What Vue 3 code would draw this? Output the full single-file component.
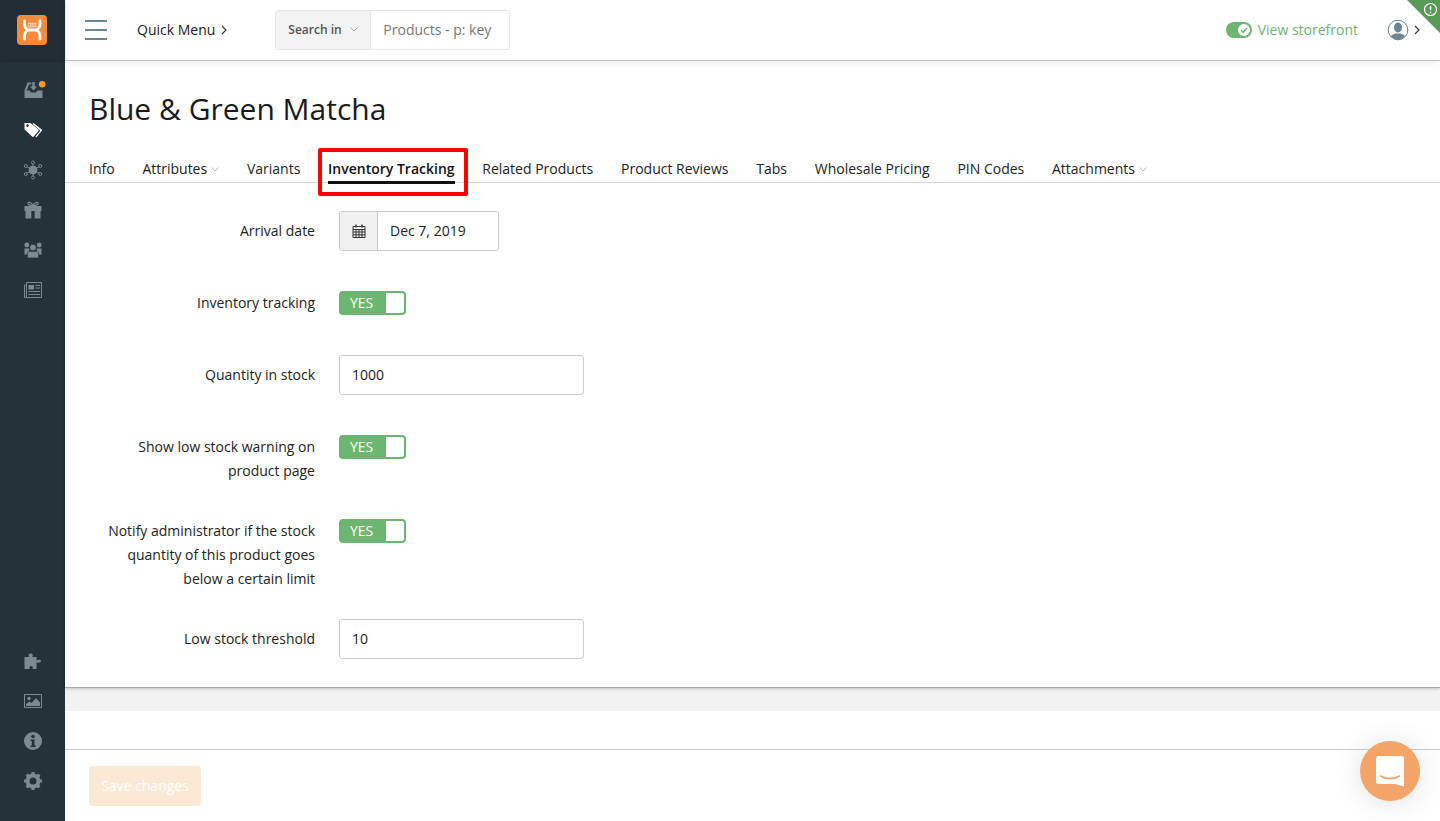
<template>
  <div class="app">
    <!-- Sidebar -->
    <aside class="sidebar">
      <div class="logo-band">
        <div class="logo">
          <svg width="30" height="30" viewBox="0 0 30 30" fill="none">
            <path d="M7.500 6v3.500c0 3 1.600 4 3.200 5.500-1.600 1.500-3.200 2.500-3.200 5.500v3.500M23 6v3.500c0 3-1.600 4-3.200 5.500 1.600 1.500 3.200 2.500 3.200 5.500v3.500M10.700 15h9.100" stroke="#fff" stroke-width="2.800" stroke-linecap="round" />
            <path d="M11.300 8.200h8M11.300 10h8M11.300 11.800h8" stroke="#fff" stroke-width="1.100" stroke-dasharray="1.200 .5" />
          </svg>
        </div>
      </div>
      <nav class="nav-top">
        <div class="nav-item">
          <svg class="inbox" width="20" height="20" viewBox="0 0 20 20" fill="#7e8a93">
            <path d="M1.500 10.500H6.500L8 12.500h5l1.500-2h5V18h-18z" />
            <path d="M1.500 10.500 4.500 2.500h3.800v2H6L3.800 10.500z" />
            <path d="M9.300 2h2.400v4.500H14l-3.500 4-3.500-4h2.300z" />
            <circle cx="19.200" cy="4.300" r="3.300" fill="#f39a2c" />
          </svg>
        </div>
        <div class="nav-item">
          <svg width="20" height="20" viewBox="0 0 20 20" fill="#fff">
            <path d="M1.500 3h6l8 6.500c.5.400.5.900.1 1.300l-4.800 5.800c-.4.500-.9.500-1.400.1L1.500 9.500zM4.500 4.300a1.300 1.300 0 1 0 .01 0z" fill-rule="evenodd" />
            <path d="M10.500 3l8.200 6.500c.5.400.5.900.1 1.300l-5.300 6.400-1.100-.8 5-6-7.800-6.400z" />
          </svg>
        </div>
        <div class="nav-item">
          <svg width="20" height="20" viewBox="0 0 20 20" fill="none" stroke="#7e8a93" stroke-width="1">
            <path d="M10 3v14M2.500 6l15 8M17.500 6l-15 8" />
            <circle cx="10" cy="10" r="4" fill="#7e8a93" />
            <circle cx="10" cy="2.500" r="1.500" fill="#25323a" />
            <circle cx="10" cy="17.500" r="1.500" fill="#25323a" />
            <circle cx="2.800" cy="6" r="1.500" fill="#25323a" />
            <circle cx="17.200" cy="6" r="1.500" fill="#25323a" />
            <circle cx="2.800" cy="14" r="1.500" fill="#25323a" />
            <circle cx="17.200" cy="14" r="1.500" fill="#25323a" />
          </svg>
        </div>
        <div class="nav-item">
          <svg width="20" height="20" viewBox="0 0 20 20" fill="#7e8a93">
            <path d="M1.500 6h17v5h-17zM2.500 11h5.800v7.500H2.500zM11.700 11h5.800v7.500h-5.800z" />
            <path d="M10 5.500C8.500 2.500 5.500 1.500 5 3c-.5 1.600 2.200 2.500 5 2.500zM10 5.500c1.500-3 4.500-4 5-2.500.5 1.600-2.200 2.500-5 2.500z" fill="none" stroke="#7e8a93" stroke-width="1.200" />
          </svg>
        </div>
        <div class="nav-item">
          <svg width="20" height="20" viewBox="0 0 20 20" fill="#7e8a93">
            <circle cx="3.800" cy="5" r="2.400" />
            <circle cx="16.200" cy="5" r="2.400" />
            <path d="M1.500 8.500h4.800v6H1.500zM13.700 8.500h4.800v6h-4.800z" />
            <circle cx="10" cy="7.500" r="3.300" stroke="#25323a" stroke-width=".7" />
            <path d="M6 11.300h8c1 0 1.600 1 1.600 2.200v4.500H4.400v-4.500c0-1.200.6-2.200 1.600-2.200z" stroke="#25323a" stroke-width=".7" />
          </svg>
        </div>
        <div class="nav-item">
          <svg width="20" height="20" viewBox="0 0 20 20" fill="none" stroke="#7e8a93">
            <path d="M3.500 2.500h15v15H3.500zM3.500 5H1.500v12.500h2" stroke-width="1" />
            <path d="M5.500 5h5.500v4.500H5.500z" fill="#7e8a93" stroke="none" />
            <path d="M12.500 5.500h4.500M12.500 8h4.500M5.500 11.500h11.500M5.500 14.500h11.500" stroke-width="1.200" />
          </svg>
        </div>
      </nav>
      <nav class="nav-bottom">
        <div class="nav-item">
          <svg width="20" height="20" viewBox="0 0 20 20" fill="#7e8a93">
            <path d="M1.500 6h5c-1.300-1-1.300-3 .8-3.500 2.400-.4 3.200 2 1.700 3.500h4.500v3.500c1-1.200 3.900-1.200 4.500.3.400 1.700-2.900 2.500-4.500 1.200V18H9.500c.8-1.500.2-3-1.300-3s-2.200 1.500-1.300 3H1.500z" />
          </svg>
        </div>
        <div class="nav-item">
          <svg width="20" height="20" viewBox="0 0 20 20" fill="none">
            <path d="M1.500 3.500h17v13h-17z" stroke="#7e8a93" />
            <circle cx="6" cy="7.500" r="1.700" fill="#7e8a93" />
            <path d="M3 15v-2l3.500-2.500 2 1.500 4.500-5 4 4.500V15z" fill="#7e8a93" />
          </svg>
        </div>
        <div class="nav-item">
          <svg width="20" height="20" viewBox="0 0 20 20">
            <circle cx="10" cy="10" r="9" fill="#7e8a93" />
            <circle cx="10" cy="5.500" r="1.800" fill="#25323a" />
            <path d="M7.500 8.500h4v6h1.200V16H7.500v-1.500h1.300V10H7.500z" fill="#25323a" />
          </svg>
        </div>
        <div class="nav-item">
          <svg width="20" height="20" viewBox="0 0 20 20" fill="none">
            <circle cx="10" cy="10" r="5.500" stroke="#7e8a93" stroke-width="4" />
            <path d="M10 1v18M1 10h18M3.600 3.600l12.800 12.800M16.400 3.600 3.600 16.400" stroke="#7e8a93" stroke-width="3.200" stroke-dasharray="3 12.500" />
          </svg>
        </div>
      </nav>
    </aside>

    <!-- Main column -->
    <div class="main">
      <header class="topbar">
        <div class="burger"><span></span><span></span><span></span></div>
        <div class="quick-menu">
          Quick Menu
          <svg width="6" height="10" viewBox="0 0 6 10" fill="none"><path d="M1 1l4 4-4 4" stroke="#333" stroke-width="1.100" /></svg>
        </div>
        <div class="search">
          <div class="search-in">
            Search in
            <svg width="8" height="5" viewBox="0 0 8 5" fill="none"><path d="M.5.5 4 4 7.500.5" stroke="#aab2b8" /></svg>
          </div>
          <div class="search-value">Products - p: key</div>
        </div>
        <div class="topbar-right">
          <div class="switch"><span class="switch-knob">
            <svg width="10" height="10" viewBox="0 0 10 10" fill="none"><path d="M2 5.200 4.200 7.300 8 3" stroke="#6cb671" stroke-width="1.500" /></svg>
          </span></div>
          <span class="storefront">View storefront</span>
          <svg class="avatar" width="22" height="22" viewBox="0 0 22 22" fill="none">
            <clipPath id="avatar-clip"><circle cx="11" cy="11" r="9.500" /></clipPath>
            <circle cx="11" cy="11" r="9.800" stroke="#6d8593" stroke-width="1" />
            <g clip-path="url(#avatar-clip)" fill="#6d8593">
              <ellipse cx="11" cy="8.500" rx="4" ry="5" />
              <path d="M2 22c0-5 3-6 6.500-7.500h5C17 16 20 17 20 22z" />
            </g>
          </svg>
          <svg width="6" height="10" viewBox="0 0 6 10" fill="none"><path d="M1 1l4 4-4 4" stroke="#333" stroke-width="1.100" /></svg>
        </div>
        <div class="corner">
          <svg width="15" height="15" viewBox="0 0 15 15" fill="none">
            <circle cx="7.500" cy="7.500" r="6" stroke="#fff" stroke-width="1.200" />
            <path d="M7.500 4v4.300M7.500 9.700v1.500" stroke="#fff" stroke-width="1.500" />
          </svg>
        </div>
      </header>

      <section class="card">
        <h1 class="title">Blue &amp; Green Matcha</h1>
        <div class="tabs">
          <div
            v-for="tab in tabs"
            :key="tab.name"
            class="tab"
            :class="{ 'tab--active': tab.active }"
          >
            {{ tab.name }}
            <svg v-if="tab.menu" width="8" height="5" viewBox="0 0 8 5" fill="none"><path d="M.5.5 4 4 7.500.5" stroke="#aab2b8" /></svg>
            <span v-if="tab.active" class="highlight"></span>
          </div>
        </div>

        <div class="form">
          <div class="row">
            <label>Arrival date</label>
            <div class="date">
              <span class="date-icon">
                <svg width="14" height="14" viewBox="0 0 14 14" fill="none" stroke="#333">
                  <path d="M1 2.500h12v11H1zM1 5.500h12M1 8h12M1 10.800h12M4 5.500v8M7 5.500v8M10 5.500v8" stroke-width="1" />
                  <path d="M4 .5v3M10 .5v3" stroke-width="1.400" />
                </svg>
              </span>
              <span class="date-value">Dec 7, 2019</span>
            </div>
          </div>
          <div class="row">
            <label>Inventory tracking</label>
            <div class="toggle"><span class="toggle-label">YES</span><span class="toggle-knob"></span></div>
          </div>
          <div class="row">
            <label>Quantity in stock</label>
            <div class="input">1000</div>
          </div>
          <div class="row row--tight">
            <label>Show low stock warning on<br />product page</label>
            <div class="toggle"><span class="toggle-label">YES</span><span class="toggle-knob"></span></div>
          </div>
          <div class="row row--tighter">
            <label>Notify administrator if the stock<br />quantity of this product goes<br />below a certain limit</label>
            <div class="toggle"><span class="toggle-label">YES</span><span class="toggle-knob"></span></div>
          </div>
          <div class="row row--last">
            <label>Low stock threshold</label>
            <div class="input">10</div>
          </div>
        </div>
      </section>

      <div class="band"></div>
      <div class="spacer"></div>

      <footer class="footer">
        <button class="save">Save changes</button>
      </footer>
    </div>

    <div class="chat">
      <svg width="30" height="32" viewBox="0 0 30 32">
        <path d="M4 1h22a3 3 0 0 1 3 3v27.500L20 29H4a3 3 0 0 1-3-3V4a3 3 0 0 1 3-3z" fill="#fff" />
        <path d="M5.500 21c5 3.500 14 3.500 19 0" fill="none" stroke="#f3a469" stroke-width="1.600" stroke-linecap="round" />
      </svg>
    </div>
  </div>
</template>

<script setup>
const tabs = [
  { name: "Info" },
  { name: "Attributes", menu: true },
  { name: "Variants" },
  { name: "Inventory Tracking", active: true },
  { name: "Related Products" },
  { name: "Product Reviews" },
  { name: "Tabs" },
  { name: "Wholesale Pricing" },
  { name: "PIN Codes" },
  { name: "Attachments", menu: true },
];
</script>

<style>
html,
body {
  margin: 0;
  height: 100%;
  overflow: hidden;
}
</style>

<style scoped>
* {
  box-sizing: border-box;
}

.app {
  display: flex;
  height: 821px;
  font-family: "Open Sans", sans-serif;
  font-size: 14px;
  color: #222;
  background: #fff;
}

.sidebar {
  width: 65px;
  flex-shrink: 0;
  display: flex;
  flex-direction: column;
  background: #25323a;
}

.logo-band {
  height: 60px;
  display: flex;
  align-items: center;
  padding-left: 17px;
  background: #222d35;
  box-shadow: 0 1px 2px rgba(0, 0, 0, 0.25);
}

.logo {
  width: 30px;
  height: 30px;
  border-radius: 4px;
  background: #f38a3c;
}

.logo svg {
  display: block;
}

.nav-top {
  margin-top: 10px;
}

.nav-bottom {
  margin-top: auto;
  margin-bottom: 20px;
}

.nav-item {
  height: 40px;
  display: flex;
  align-items: center;
  justify-content: center;
}

.inbox {
  overflow: visible;
}

.main {
  flex: 1;
  min-width: 0;
  display: flex;
  flex-direction: column;
}

.topbar {
  position: relative;
  height: 61px;
  flex-shrink: 0;
  display: flex;
  align-items: center;
  padding: 0 20px 1px;
  border-bottom: 1px solid #c4c4c4;
  box-shadow: 0 2px 8px rgba(0, 0, 0, 0.07);
}

.burger {
  width: 22px;
  display: flex;
  flex-direction: column;
  gap: 7px;
}

.burger span {
  height: 2px;
  background: #6d8593;
}

.quick-menu {
  margin-left: 30px;
  display: flex;
  align-items: center;
  gap: 6px;
}

.search {
  margin-left: 48px;
  width: 235px;
  height: 40px;
  display: flex;
  border: 1px solid #e6e6e6;
  border-radius: 3px;
}

.search-in {
  width: 95px;
  display: flex;
  align-items: center;
  gap: 8px;
  padding-left: 12px;
  font-size: 12px;
  font-weight: 600;
  color: #555;
  background: #f3f3f3;
  border-right: 1px solid #e6e6e6;
}

.search-value {
  padding-left: 12px;
  line-height: 38px;
  color: #777;
}

.topbar-right {
  margin-left: auto;
  display: flex;
  align-items: center;
}

.switch {
  width: 26px;
  height: 16px;
  padding: 2px;
  display: flex;
  justify-content: flex-end;
  border-radius: 8px;
  background: #6cb671;
}

.switch-knob {
  width: 12px;
  height: 12px;
  display: flex;
  align-items: center;
  justify-content: center;
  border-radius: 50%;
  background: #fff;
}

.storefront {
  margin-left: 6px;
  color: #6cb671;
}

.avatar {
  margin-left: 29px;
  margin-right: 5px;
}

.corner {
  position: absolute;
  top: 0;
  right: 0;
  width: 33px;
  height: 33px;
  background: #5a9a58;
  clip-path: polygon(0 0, 100% 0, 100% 100%);
}

.corner svg {
  position: absolute;
  top: 2px;
  right: 2px;
}

.card {
  height: 627px;
  flex-shrink: 0;
  border-bottom: 1px solid #aaa;
  box-shadow: 0 1px 3px rgba(0, 0, 0, 0.2);
  position: relative;
}

.title {
  margin: 0;
  padding: 27px 24px 0;
  font-size: 30px;
  font-weight: 400;
  line-height: 41px;
  color: #1a1a1a;
}

.tabs {
  margin-top: 29px;
  height: 25px;
  display: flex;
  gap: 27.750px;
  padding-left: 24px;
  border-bottom: 1px solid #d8d8d8;
}

.tab {
  position: relative;
  height: 25px;
  display: flex;
  align-items: flex-start;
  line-height: 21px;
  white-space: nowrap;
}

.tab svg {
  margin: 9px 0 0 4px;
}

.tab--active {
  font-weight: 600;
  color: #111;
  border-bottom: 3px solid #111;
  height: 26px;
}

.highlight {
  position: absolute;
  top: -10px;
  left: -10px;
  right: -13px;
  bottom: -15px;
  border: 4px solid #f00;
  border-radius: 2px;
}

.form {
  padding-top: 28px;
}

.row {
  display: flex;
  align-items: flex-start;
  margin-bottom: 40px;
}

.row--tight {
  margin-bottom: 36px;
}

.row--tighter {
  margin-bottom: 28px;
}

.row--last {
  margin-bottom: 0;
}

.row label {
  width: 250px;
  text-align: right;
  line-height: 24px;
  color: #222;
}

.row:first-child label,
.row:nth-child(3) label,
.row--last label {
  line-height: 40px;
}

.date,
.input {
  margin-left: 24px;
  height: 40px;
  display: flex;
  border: 1px solid #ccc;
  border-radius: 3px;
}

.date {
  width: 160px;
}

.date-icon {
  width: 38px;
  display: flex;
  align-items: center;
  justify-content: center;
  background: #f0f0f0;
  border-right: 1px solid #ccc;
}

.date-value {
  padding-left: 12px;
  line-height: 38px;
}

.input {
  width: 245px;
  padding-left: 12px;
  line-height: 38px;
}

.toggle {
  margin-left: 24px;
  width: 67px;
  height: 24px;
  display: flex;
  align-items: center;
  justify-content: space-between;
  padding: 2px;
  border-radius: 4px;
  background: #6cb671;
}

.toggle-label {
  padding-left: 9px;
  line-height: 19px;
  margin-bottom: 1px;
  color: #fff;
}

.toggle-knob {
  width: 18px;
  height: 20px;
  background: #fff;
  border-radius: 0 2px 2px 0;
}

.band {
  height: 23px;
  flex-shrink: 0;
  background: #f2f2f2;
}

.spacer {
  height: 38px;
  flex-shrink: 0;
}

.footer {
  flex: 1;
  padding: 16px 24px;
  border-top: 1px solid #ccc;
}

.save {
  width: 112px;
  height: 40px;
  padding: 0 0 2px;
  border: none;
  border-radius: 3px;
  background: #fbe9d3;
  color: #fff;
  font-family: inherit;
  font-size: 14px;
}

.chat {
  position: fixed;
  right: 20px;
  bottom: 20px;
  width: 60px;
  height: 60px;
  display: flex;
  align-items: center;
  justify-content: center;
  border-radius: 50%;
  background: #f3a469;
  box-shadow: 0 2px 30px rgba(0, 0, 0, 0.12);
}
</style>
